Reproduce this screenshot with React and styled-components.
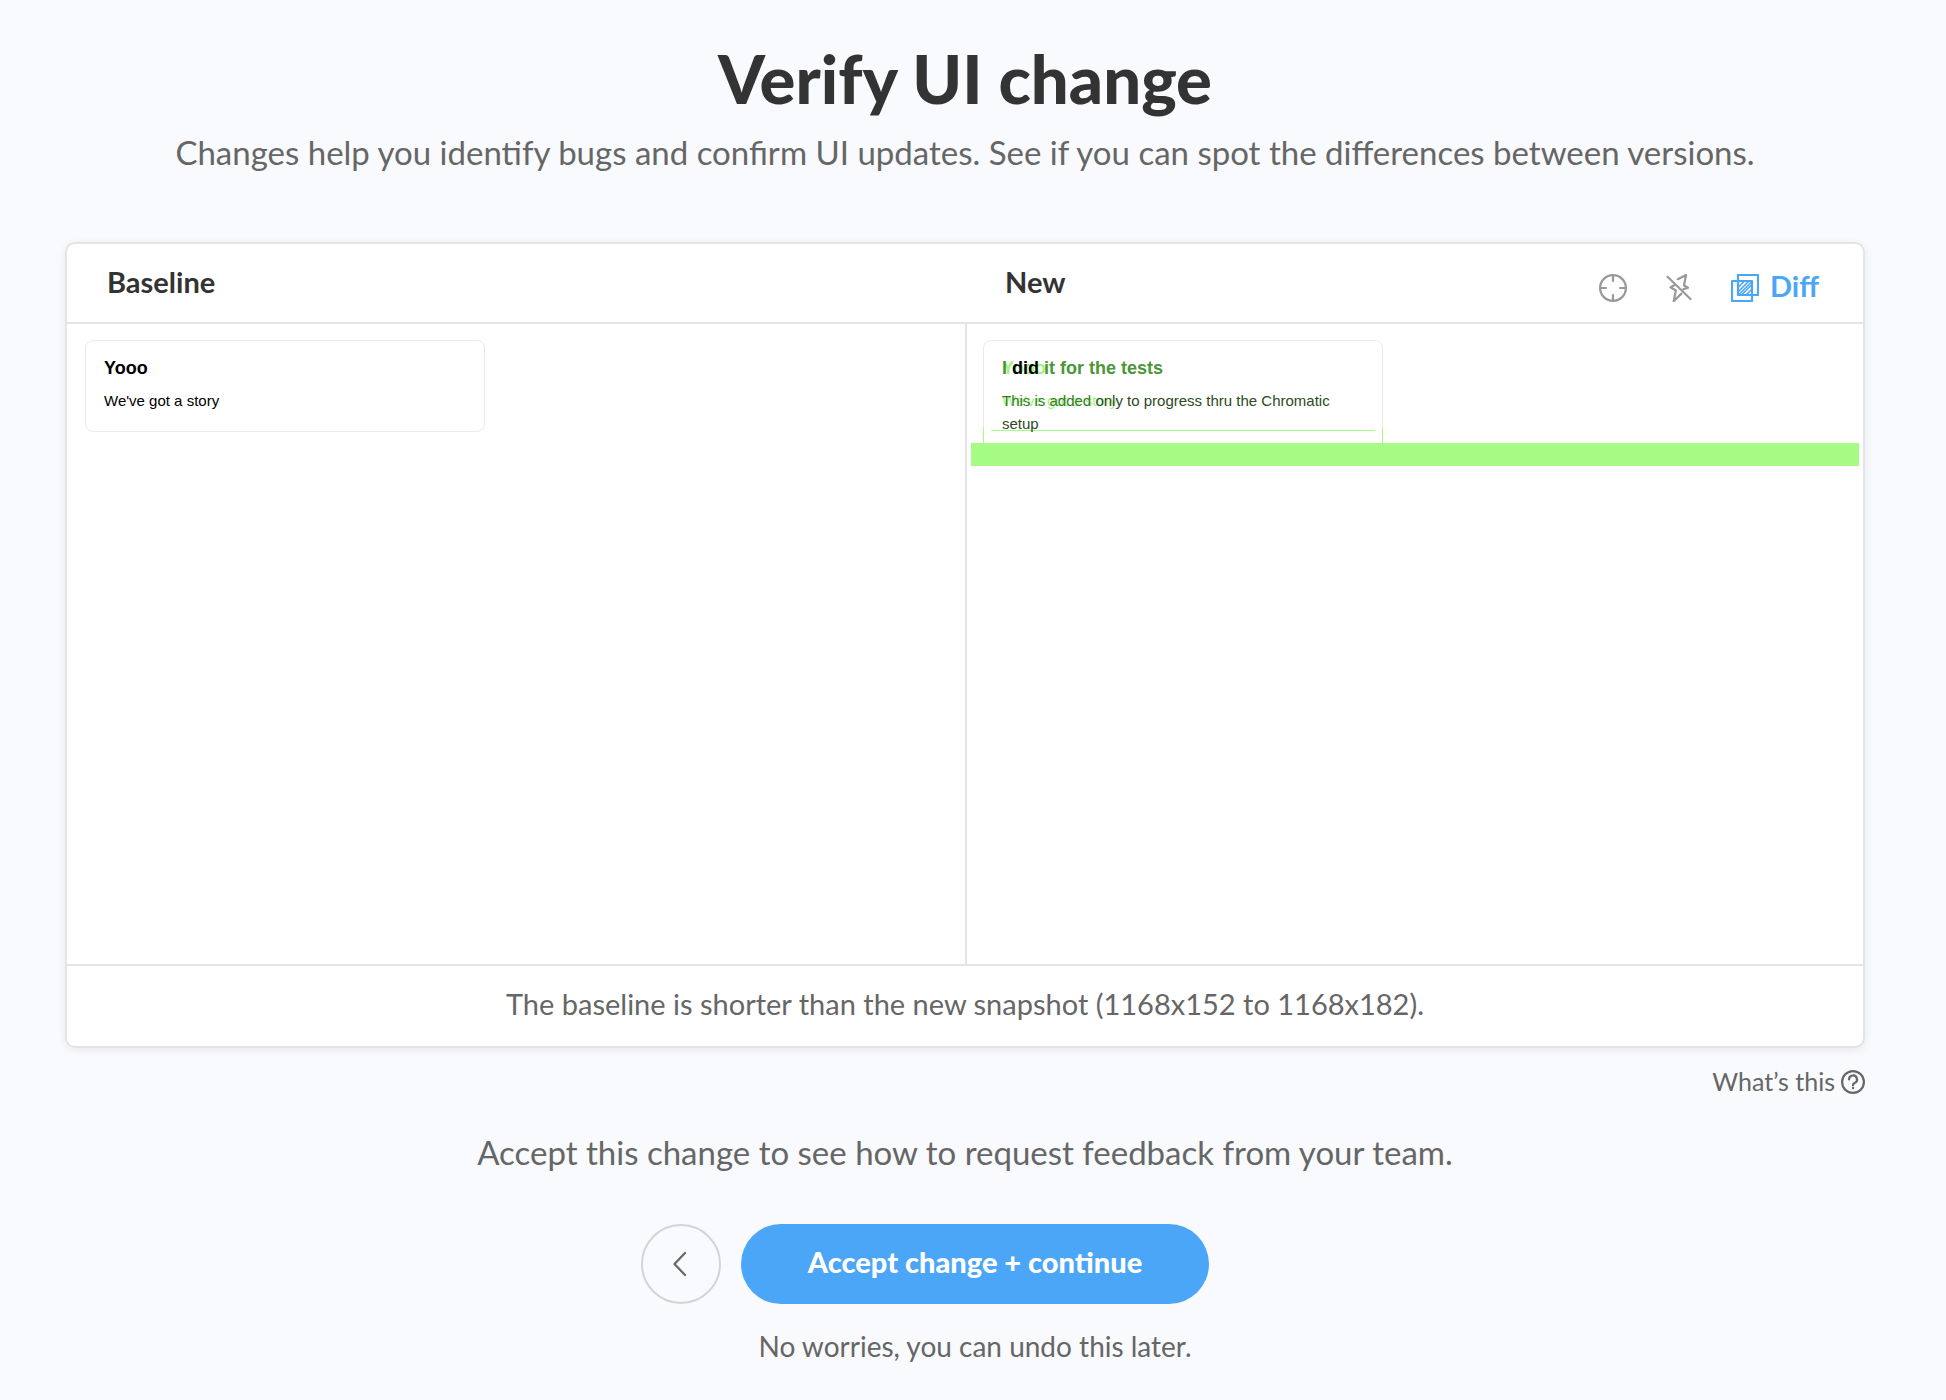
import React from 'react';
import styled, { createGlobalStyle, css } from 'styled-components';

const color = {
  page: '#f8fafd',
  ink: '#333333',
  mid: '#666666',
  icon: '#999999',
  line: '#e4e4e4',
  blue: '#4ca6f7',
  green: '#a5fb83',
};

const snapshotInk = {
  same: '#000000',
  bright: '#4b9638',
  leaf: '#367a28',
  dark: '#2b4a23',
};

const GlobalStyle = createGlobalStyle`
  * { box-sizing: border-box; }
  body {
    margin: 0;
    background: ${color.page};
    color: ${color.mid};
    font-family: Lato, 'Liberation Sans', sans-serif;
  }
  h1, h2, h3, p { margin: 0; }
  button { font: inherit; cursor: pointer; }
`;

const Page = styled.main`
  display: flex;
  flex-direction: column;
  padding: 38px 81px 32px 65px;
`;

const Title = styled.h1`
  color: ${color.ink};
  font-size: 67px;
  font-weight: 900;
  line-height: 80px;
  text-align: center;
`;

const Lead = styled.p`
  font-size: 33px;
  line-height: 40px;
  text-align: center;
`;

const Intro = styled.header`
  display: grid;
  gap: 14px;
  margin-bottom: 70px;
`;

const Panel = styled.section`
  background: #ffffff;
  border: 2px solid ${color.line};
  border-radius: 10px;
  box-shadow: 0 2px 10px rgba(0, 0, 0, 0.07);
`;

const PanelHead = styled.div`
  display: grid;
  grid-template-columns: 1fr 1fr;
  height: 80px;
  border-bottom: 2px solid ${color.line};
`;

const HeadCell = styled.div`
  display: flex;
  align-items: center;
  justify-content: space-between;
  padding: 0 44px 0 40px;
`;

const PaneTitle = styled.h2`
  padding-bottom: 2px;
  color: ${color.ink};
  font-size: 29px;
  font-weight: 700;
  line-height: 36px;
`;

const Toolbar = styled.div`
  display: flex;
  align-items: center;
  gap: 38px;
  padding-top: 10px;
`;

const ToolButton = styled.button`
  display: flex;
  align-items: center;
  gap: 11px;
  padding: 0;
  border: 0;
  background: none;
  color: ${(p) => (p.$active ? color.blue : color.icon)};
  && { font-size: 29px; font-weight: 700; }
`;

const ToolLabel = styled.span`
  padding-bottom: 4px;
  line-height: 36px;
`;

const Panes = styled.div`
  display: grid;
  grid-template-columns: 1fr 1fr;
  height: 640px;
`;

const Pane = styled.div`
  padding: 4px 4px 4px ${(p) => (p.$divided ? '4px' : '6px')};
  ${(p) => p.$divided && css`border-left: 2px solid ${color.line};`}
`;

const Snapshot = styled.div`
  position: relative;
  padding: 12px 12px 11px;
  color: #000000;
  font-family: 'Liberation Sans', Arial, sans-serif;
`;

const StoryCard = styled.article`
  position: relative;
  width: 400px;
  padding: 15px 18px 19px;
  border: 1px solid #ebebeb;
  border-radius: 8px;
`;

const StoryTitle = styled.h3`
  position: relative;
  margin-bottom: 9px;
  font-size: 18px;
  line-height: 24px;
`;

const StoryText = styled.p`
  position: relative;
  font-size: 15px;
  line-height: 23px;
`;

const Ghost = styled.span`
  position: absolute;
  inset: 0 auto auto 0;
  color: #a0f680;
  white-space: nowrap;
`;

const Ink = styled.span`
  position: relative;
  color: ${(p) => snapshotInk[p.$tone]};
`;

const OldBottom = styled.span`
  position: absolute;
  top: 89px;
  left: 7px;
  right: 7px;
  height: 1px;
  background: ${color.green};
`;

const NewSides = styled.span`
  position: absolute;
  top: 86px;
  bottom: 8px;
  left: -1px;
  right: -1px;
  border: solid ${color.green};
  border-width: 0 1px;
`;

const AddedStrip = styled.span`
  position: absolute;
  left: 0;
  right: 0;
  bottom: 0;
  height: 23px;
  background: rgba(163, 251, 128, 0.97);
`;

const PanelFoot = styled.p`
  display: flex;
  align-items: center;
  justify-content: center;
  height: 82px;
  padding-bottom: 4px;
  border-top: 2px solid ${color.line};
  font-size: 29px;
  line-height: 36px;
`;

const HelpLink = styled.a`
  display: flex;
  align-items: center;
  align-self: flex-end;
  gap: 6px;
  margin-top: 16px;
  color: ${color.mid};
  font-size: 25px;
  line-height: 36px;
  text-decoration: none;
`;

const HelpLabel = styled.span`
  padding-bottom: 2px;
  line-height: 34px;
`;

const Closing = styled.section`
  display: grid;
  gap: 52px;
  margin-top: 32px;
`;

const Actions = styled.div`
  display: grid;
  grid-template-columns: 80px 468px 60px;
  justify-content: center;
  gap: 22px 20px;
`;

const BackButton = styled.button`
  display: grid;
  place-items: center;
  height: 80px;
  padding: 0;
  border: 2px solid #d4d4d4;
  border-radius: 50%;
  background: none;
  color: ${color.mid};
`;

const PrimaryButton = styled.button`
  height: 80px;
  padding: 0 0 6px;
  border: 0;
  border-radius: 40px;
  background: ${color.blue};
  color: #ffffff;
  && { font-size: 29px; font-weight: 900; }
`;

const Note = styled.p`
  grid-column: 2;
  font-size: 28px;
  line-height: 40px;
  text-align: center;
`;

const Icon = styled.svg`
  display: block;
  flex: none;
  fill: none;
  stroke: currentColor;
  stroke-width: 2.2;
  stroke-linecap: round;
  stroke-linejoin: round;
`;

const TargetIcon = () => (
  <Icon width="28" height="28" viewBox="0 0 28 28" aria-hidden="true">
    <circle cx="14" cy="14" r="12.9" />
    <path d="M14 1v6M14 21v6M1 14h6M21 14h6" />
  </Icon>
);

const FlashOffIcon = () => (
  <Icon width="28" height="28" viewBox="0 0 28 28" aria-hidden="true">
    <path d="M2.5 2.8 25.5 25M12.8 5.2 21 1l-2 10.5 4 2.2-4.6 1.6M10.3 10.8l-4.8 2.5 5.4 3.2-2.2 10.7 7.6-7.6" />
  </Icon>
);

const DiffIcon = () => (
  <Icon width="28" height="28" viewBox="0 0 28 28" aria-hidden="true">
    <path d="M7 1h20v20H7zM1 7h20v20H1z" />
    <path d="M8 12.5 12.5 8M8 17 17 8M8 20.5 20.5 8M11 20.5 20.5 11M15.5 20.5l5-5" strokeWidth="1.6" />
  </Icon>
);

const HelpIcon = () => (
  <Icon width="24" height="24" viewBox="0 0 24 24" aria-hidden="true">
    <circle cx="12" cy="12" r="10.9" />
    <path d="M8 9.4a4 4 0 1 1 5.6 3.7c-1 .5-1.6 1-1.6 2.1" />
    <circle cx="12" cy="18" r="1.2" fill="currentColor" stroke="none" />
  </Icon>
);

const BackIcon = () => (
  <Icon width="28" height="28" viewBox="0 0 28 28" aria-hidden="true">
    <path d="M18 3 7.5 14 18 25" />
  </Icon>
);

export default function App() {
  return (
    <>
      <GlobalStyle />
      <Page>
        <Intro>
          <Title>Verify UI change</Title>
          <Lead>
            Changes help you identify bugs and confirm UI updates. See if you can spot the
            differences between versions.
          </Lead>
        </Intro>

        <Panel>
          <PanelHead>
            <HeadCell>
              <PaneTitle>Baseline</PaneTitle>
            </HeadCell>
            <HeadCell>
              <PaneTitle>New</PaneTitle>
              <Toolbar>
                <ToolButton type="button" aria-label="Focus"><TargetIcon /></ToolButton>
                <ToolButton type="button" aria-label="Strobe"><FlashOffIcon /></ToolButton>
                <ToolButton type="button" aria-pressed="true" $active>
                  <DiffIcon />
                  <ToolLabel>Diff</ToolLabel>
                </ToolButton>
              </Toolbar>
            </HeadCell>
          </PanelHead>

          <Panes>
            <Pane>
              <Snapshot>
                <StoryCard>
                  <StoryTitle>Yooo</StoryTitle>
                  <StoryText>We've got a story</StoryText>
                </StoryCard>
              </Snapshot>
            </Pane>
            <Pane $divided>
              <Snapshot>
                <StoryCard>
                  <OldBottom />
                  <NewSides />
                  <StoryTitle>
                    <Ghost aria-hidden="true">Yooo</Ghost>
                    <Ink $tone="bright">I</Ink> <Ink $tone="same">did</Ink>{' '}
                    <Ink $tone="bright">it for the tests</Ink>
                  </StoryTitle>
                  <StoryText>
                    <Ghost aria-hidden="true">We've got a story</Ghost>
                    <Ink $tone="leaf">This is added</Ink>{' '}
                    <Ink $tone="dark">only to progress thru the Chromatic setup</Ink>
                  </StoryText>
                </StoryCard>
                <AddedStrip />
              </Snapshot>
            </Pane>
          </Panes>

          <PanelFoot>The baseline is shorter than the new snapshot (1168x152 to 1168x182).</PanelFoot>
        </Panel>

        <HelpLink href="#help">
          <HelpLabel>What’s this</HelpLabel>
          <HelpIcon />
        </HelpLink>

        <Closing>
          <Lead>Accept this change to see how to request feedback from your team.</Lead>
          <Actions>
            <BackButton type="button" aria-label="Back"><BackIcon /></BackButton>
            <PrimaryButton type="button">Accept change + continue</PrimaryButton>
            <Note>No worries, you can undo this later.</Note>
          </Actions>
        </Closing>
      </Page>
    </>
  );
}
